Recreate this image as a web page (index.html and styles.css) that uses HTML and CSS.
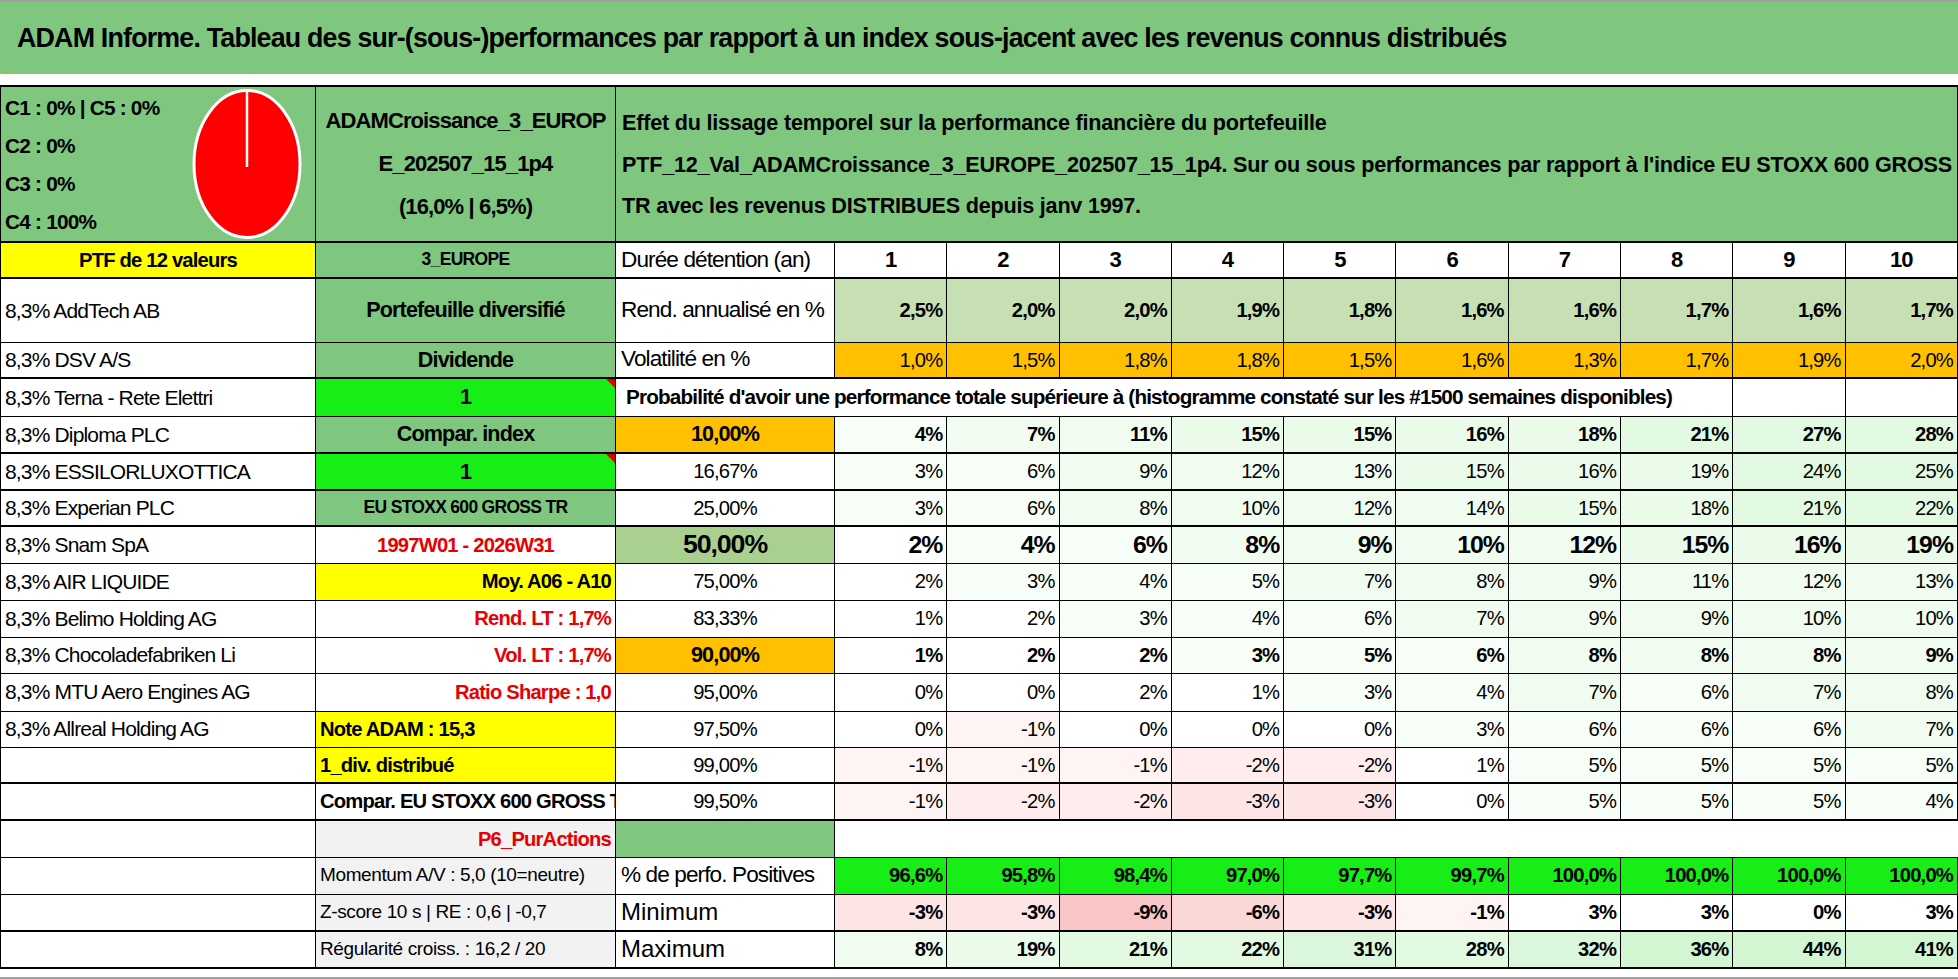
FILE: index.html
```html
<!DOCTYPE html>
<html lang="fr">
<head>
<meta charset="utf-8">
<title>ADAM Informe</title>
<link rel="stylesheet" href="styles.css">
</head>
<body>
<div class="sheet">
  <div class="title">ADAM Informe. Tableau des sur-(sous-)performances par rapport à un index sous-jacent avec les revenus connus distribués</div>
  <div class="gap"><span class="mark">&#8217;&#8217;</span></div>
  <table class="grid">
    <colgroup>
      <col class="ca"><col class="cb"><col class="cc">
      <col class="cn"><col class="cn"><col class="cn"><col class="cn"><col class="cn">
      <col class="cn"><col class="cn"><col class="cn"><col class="cn"><col class="cn">
    </colgroup>
    <tbody>
      <tr class="h-head">
        <td class="green a-head">
          <div class="head-a">
            <div class="clines">
              <div>C1 : 0% | C5 : 0%</div>
              <div>C2 : 0%</div>
              <div>C3 : 0%</div>
              <div>C4 : 100%</div>
            </div>
            <svg class="pie" width="112" height="152" viewBox="0 0 112 152">
              <ellipse cx="56" cy="76" rx="53" ry="73.5" fill="#ff0000" stroke="#ffffff" stroke-width="3"/>
              <line x1="56" y1="3" x2="56" y2="79" stroke="#ffffff" stroke-width="2.5"/>
            </svg>
          </div>
        </td>
        <td class="green b-head">ADAMCroissance_3_EUROP<br>E_202507_15_1p4<br>(16,0% | 6,5%)</td>
        <td class="green c-head" colspan="11">Effet du lissage temporel sur la performance financière du portefeuille<br>PTF_12_Val_ADAMCroissance_3_EUROPE_202507_15_1p4. Sur ou sous performances par rapport à l'indice EU STOXX 600 GROSS<br>TR avec les revenus DISTRIBUES depuis janv 1997.</td>
      </tr>
      <tr class="r36 tk">
        <td class="yellow b ctr f22">PTF de 12 valeurs</td>
        <td class="green b ctr f19">3_EUROPE</td>
        <td class="lbl">Durée détention (an)</td>
        <td class="b ctr f24">1</td><td class="b ctr f24">2</td><td class="b ctr f24">3</td><td class="b ctr f24">4</td><td class="b ctr f24">5</td>
        <td class="b ctr f24">6</td><td class="b ctr f24">7</td><td class="b ctr f24">8</td><td class="b ctr f24">9</td><td class="b ctr f24">10</td>
      </tr>
      <tr class="r64 tk">
        <td class="nm">8,3% AddTech AB</td>
        <td class="green b ctr f23">Portefeuille diversifié</td>
        <td class="lbl">Rend. annualisé en %</td>
        <td class="lg v b">2,5%</td><td class="lg v b">2,0%</td><td class="lg v b">2,0%</td><td class="lg v b">1,9%</td><td class="lg v b">1,8%</td>
        <td class="lg v b">1,6%</td><td class="lg v b">1,6%</td><td class="lg v b">1,7%</td><td class="lg v b">1,6%</td><td class="lg v b">1,7%</td>
      </tr>
      <tr class="r36">
        <td class="nm">8,3% DSV A/S</td>
        <td class="green b ctr f23">Dividende</td>
        <td class="lbl">Volatilité en %</td>
        <td class="orange v">1,0%</td><td class="orange v">1,5%</td><td class="orange v">1,8%</td><td class="orange v">1,8%</td><td class="orange v">1,5%</td>
        <td class="orange v">1,6%</td><td class="orange v">1,3%</td><td class="orange v">1,7%</td><td class="orange v">1,9%</td><td class="orange v">2,0%</td>
      </tr>
      <tr class="r38 tk">
        <td class="nm">8,3% Terna - Rete Elettri</td>
        <td class="lime b ctr f23 note">1</td>
        <td class="prob" colspan="9">Probabilité d'avoir une performance totale supérieure à (histogramme constaté sur les #1500 semaines disponibles)</td>
        <td></td><td></td>
      </tr>
      <tr class="r37">
        <td class="nm">8,3% Diploma PLC</td>
        <td class="green b ctr f23">Compar. index</td>
        <td class="orange b ctr f23">10,00%</td>
        <td class="v b g1">4%</td><td class="v b g2">7%</td><td class="v b g2">11%</td><td class="v b g3">15%</td><td class="v b g3">15%</td>
        <td class="v b g3">16%</td><td class="v b g3">18%</td><td class="v b g4">21%</td><td class="v b g4">27%</td><td class="v b g4">28%</td>
      </tr>
      <tr class="r37 tk">
        <td class="nm">8,3% ESSILORLUXOTTICA</td>
        <td class="lime b ctr f23 note">1</td>
        <td class="pc">16,67%</td>
        <td class="v g1">3%</td><td class="v g1">6%</td><td class="v g2">9%</td><td class="v g2">12%</td><td class="v g2">13%</td>
        <td class="v g3">15%</td><td class="v g3">16%</td><td class="v g3">19%</td><td class="v g4">24%</td><td class="v g4">25%</td>
      </tr>
      <tr class="r36 tk">
        <td class="nm">8,3% Experian PLC</td>
        <td class="green b ctr f19">EU STOXX 600 GROSS TR</td>
        <td class="pc">25,00%</td>
        <td class="v g1">3%</td><td class="v g1">6%</td><td class="v g2">8%</td><td class="v g2">10%</td><td class="v g2">12%</td>
        <td class="v g2">14%</td><td class="v g3">15%</td><td class="v g3">18%</td><td class="v g4">21%</td><td class="v g4">22%</td>
      </tr>
      <tr class="r37 tk">
        <td class="nm">8,3% Snam SpA</td>
        <td class="b ctr f22 red">1997W01 - 2026W31</td>
        <td class="mg b ctr f29">50,00%</td>
        <td class="v b big">2%</td><td class="v b big g1">4%</td><td class="v b big g1">6%</td><td class="v b big g2">8%</td><td class="v b big g2">9%</td>
        <td class="v b big g2">10%</td><td class="v b big g2">12%</td><td class="v b big g3">15%</td><td class="v b big g3">16%</td><td class="v b big g3">19%</td>
      </tr>
      <tr class="r37">
        <td class="nm">8,3% AIR LIQUIDE</td>
        <td class="yellow b rt f22">Moy. A06 - A10</td>
        <td class="pc">75,00%</td>
        <td class="v">2%</td><td class="v g1">3%</td><td class="v g1">4%</td><td class="v g1">5%</td><td class="v g2">7%</td>
        <td class="v g2">8%</td><td class="v g2">9%</td><td class="v g2">11%</td><td class="v g2">12%</td><td class="v g2">13%</td>
      </tr>
      <tr class="r37">
        <td class="nm">8,3% Belimo Holding AG</td>
        <td class="b rt f22 red">Rend. LT : 1,7%</td>
        <td class="pc">83,33%</td>
        <td class="v">1%</td><td class="v">2%</td><td class="v g1">3%</td><td class="v g1">4%</td><td class="v g1">6%</td>
        <td class="v g2">7%</td><td class="v g2">9%</td><td class="v g2">9%</td><td class="v g2">10%</td><td class="v g2">10%</td>
      </tr>
      <tr class="r36">
        <td class="nm">8,3% Chocoladefabriken Li</td>
        <td class="b rt f22 red">Vol. LT : 1,7%</td>
        <td class="orange b ctr f23">90,00%</td>
        <td class="v b">1%</td><td class="v b">2%</td><td class="v b">2%</td><td class="v b g1">3%</td><td class="v b g1">5%</td>
        <td class="v b g1">6%</td><td class="v b g2">8%</td><td class="v b g2">8%</td><td class="v b g2">8%</td><td class="v b g2">9%</td>
      </tr>
      <tr class="r38">
        <td class="nm">8,3% MTU Aero Engines AG</td>
        <td class="b rt f22 red">Ratio Sharpe : 1,0</td>
        <td class="pc">95,00%</td>
        <td class="v">0%</td><td class="v">0%</td><td class="v">2%</td><td class="v">1%</td><td class="v g1">3%</td>
        <td class="v g1">4%</td><td class="v g2">7%</td><td class="v g1">6%</td><td class="v g2">7%</td><td class="v g2">8%</td>
      </tr>
      <tr class="r36">
        <td class="nm">8,3% Allreal Holding AG</td>
        <td class="yellow b lt f22">Note ADAM : 15,3</td>
        <td class="pc">97,50%</td>
        <td class="v">0%</td><td class="v r1">-1%</td><td class="v">0%</td><td class="v">0%</td><td class="v">0%</td>
        <td class="v g1">3%</td><td class="v g1">6%</td><td class="v g1">6%</td><td class="v g1">6%</td><td class="v g2">7%</td>
      </tr>
      <tr class="r36">
        <td class="nm"></td>
        <td class="yellow b lt f22">1_div. distribué</td>
        <td class="pc">99,00%</td>
        <td class="v r1">-1%</td><td class="v r1">-1%</td><td class="v r1">-1%</td><td class="v r2">-2%</td><td class="v r2">-2%</td>
        <td class="v">1%</td><td class="v g1">5%</td><td class="v g1">5%</td><td class="v g1">5%</td><td class="v g1">5%</td>
      </tr>
      <tr class="r37 tk">
        <td class="nm"></td>
        <td class="b lt f22 clip">Compar. EU STOXX 600 GROSS TR</td>
        <td class="pc">99,50%</td>
        <td class="v r1">-1%</td><td class="v r2">-2%</td><td class="v r2">-2%</td><td class="v r3">-3%</td><td class="v r3">-3%</td>
        <td class="v">0%</td><td class="v g1">5%</td><td class="v g1">5%</td><td class="v g1">5%</td><td class="v g1">4%</td>
      </tr>
      <tr class="r37 tk p6">
        <td class="nm"></td>
        <td class="gray b rt f22 red">P6_PurActions</td>
        <td class="green"></td>
        <td class="open"></td><td class="open"></td><td class="open"></td><td class="open"></td><td class="open"></td>
        <td class="open"></td><td class="open"></td><td class="open"></td><td class="open"></td><td class="open"></td>
      </tr>
      <tr class="r37">
        <td class="nm"></td>
        <td class="gray lt mo">Momentum A/V : 5,0 (10=neutre)</td>
        <td class="lbl">% de perfo. Positives</td>
        <td class="lime v b f23">96,6%</td><td class="lime v b f23">95,8%</td><td class="lime v b f23">98,4%</td><td class="lime v b f23">97,0%</td><td class="lime v b f23">97,7%</td>
        <td class="lime v b f23">99,7%</td><td class="lime v b f23">100,0%</td><td class="lime v b f23">100,0%</td><td class="lime v b f23">100,0%</td><td class="lime v b f23">100,0%</td>
      </tr>
      <tr class="r37">
        <td class="nm"></td>
        <td class="gray lt mo">Z-score 10 s | RE : 0,6 | -0,7</td>
        <td class="lbl mm">Minimum</td>
        <td class="v b f23 r3">-3%</td><td class="v b f23 r3">-3%</td><td class="v b f23 r5">-9%</td><td class="v b f23 r4">-6%</td><td class="v b f23 r3">-3%</td>
        <td class="v b f23 r1">-1%</td><td class="v b f23">3%</td><td class="v b f23">3%</td><td class="v b f23">0%</td><td class="v b f23">3%</td>
      </tr>
      <tr class="r37 tk">
        <td class="nm"></td>
        <td class="gray lt mo">Régularité croiss. : 16,2 / 20</td>
        <td class="lbl mm">Maximum</td>
        <td class="v b f23 g2">8%</td><td class="v b f23 g3">19%</td><td class="v b f23 g4">21%</td><td class="v b f23 g4">22%</td><td class="v b f23 g5">31%</td>
        <td class="v b f23 g4">28%</td><td class="v b f23 g5">32%</td><td class="v b f23 g6">36%</td><td class="v b f23 g6">44%</td><td class="v b f23 g6">41%</td>
      </tr>
    </tbody>
  </table>
</div>
</body>
</html>
```
FILE: styles.css
```css
* { box-sizing: border-box; }
html, body { margin: 0; padding: 0; background: #ffffff; }
body {
  width: 1958px;
  height: 979px;
  overflow: hidden;
  font-family: "Liberation Sans", Arial, sans-serif;
  color: #000000;
}
.sheet {
  width: 1958px;
  height: 979px;
  border-top: 2px solid #a0a0a0;
  border-bottom: 2px solid #a0a0a0;
}
.title {
  height: 72px;
  background: #7fc77f;
  display: flex;
  align-items: center;
  padding-left: 17px;
  font-weight: bold;
  font-size: 26.8px;
  letter-spacing: -0.03em;
  white-space: nowrap;
}
.gap {
  height: 11px;
  position: relative;
}
.mark {
  position: absolute;
  left: 4px;
  top: -3px;
  font-size: 10px;
  color: #e0a020;
}
.grid {
  width: 1957px;
  table-layout: fixed;
  border-collapse: collapse;
  border-top: 2px solid #000;
  border-bottom: 2px solid #000;
}
col.ca { width: 315px; }
col.cb { width: 300px; }
col.cc { width: 219px; }
col.cn { width: 112.3px; }

td {
  border: 1px solid #000;
  padding: 0 4px;
  white-space: nowrap;
  overflow: hidden;
  vertical-align: middle;
  font-size: 19.5px;
  line-height: 1.1;
  letter-spacing: -0.04em;
}
tr.h-head { height: 156px; }
tr.r36 { height: 36px; }
tr.r37 { height: 37px; }
tr.r38 { height: 38px; }
tr.r64 { height: 64px; }
tr.tk td { border-top-width: 2px; }

/* header block */
.a-head { padding: 0 12px 0 4px; vertical-align: middle; }
.head-a { display: flex; justify-content: space-between; align-items: center; }
.clines { font-weight: bold; font-size: 20.8px; line-height: 38px; padding-top: 2px; }
.pie { display: block; }
.b-head {
  vertical-align: top;
  text-align: center;
  font-weight: bold;
  font-size: 22px;
  line-height: 43px;
  padding-top: 12px;
}
.c-head {
  vertical-align: top;
  text-align: left;
  font-weight: bold;
  font-size: 21.6px;
  letter-spacing: -0.01em;
  line-height: 41.5px;
  padding: 15px 6px 0 6px;
}

/* typographic helpers */
.b { font-weight: bold; }
.ctr { text-align: center; }
.rt { text-align: right; }
.lt { text-align: left; }
.f19 { font-size: 17.5px; }
.f22 { font-size: 20.2px; }
.f23 { font-size: 21.6px; }
.f24 { font-size: 22px; }
.f29 { font-size: 26.7px; }
.red { color: #e80000; }
.clip { text-overflow: clip; }

.nm { font-size: 21px; text-align: left; padding-left: 4px; }
.lbl { font-size: 22.6px; text-align: left; padding-left: 5px; }
.lbl.mm { font-size: 24px; letter-spacing: 0; }
.mo { font-size: 19px; letter-spacing: -0.02em; }
.prob { font-size: 20.7px; font-weight: bold; padding-left: 10px; text-align: left; }
.pc { font-size: 20.2px; text-align: center; }
.v { text-align: right; padding-right: 4px; font-size: 20.2px; }
.v.big { font-size: 24.8px; }

/* fills */
.green { background: #7fc77f; }
.lime { background: #16ee16; }
.yellow { background: #ffff00; }
.orange { background: #ffc000; }
.lg { background: #c6e0b4; }
.mg { background: #a9d08e; }
.gray { background: #f2f2f2; }

.g1 { background: #f7fdf7; }
.g2 { background: #f0fcf0; }
.g3 { background: #eafbea; }
.g4 { background: #e2f9e2; }
.g5 { background: #dbf7db; }
.g6 { background: #d2f5d2; }
.r1 { background: #fff4f4; }
.r2 { background: #ffeded; }
.r3 { background: #fde5e5; }
.r4 { background: #fbd8d8; }
.r5 { background: #f8c6c6; }

/* comment indicator */
td.note { position: relative; }
td.note::after {
  content: "";
  position: absolute;
  top: 0;
  right: 0;
  border-top: 9px solid #e00000;
  border-left: 9px solid transparent;
}

/* open area of the P6 row */
tr.p6 td.open {
  border-left: none;
  border-right: none;
  background: #ffffff;
}
```
